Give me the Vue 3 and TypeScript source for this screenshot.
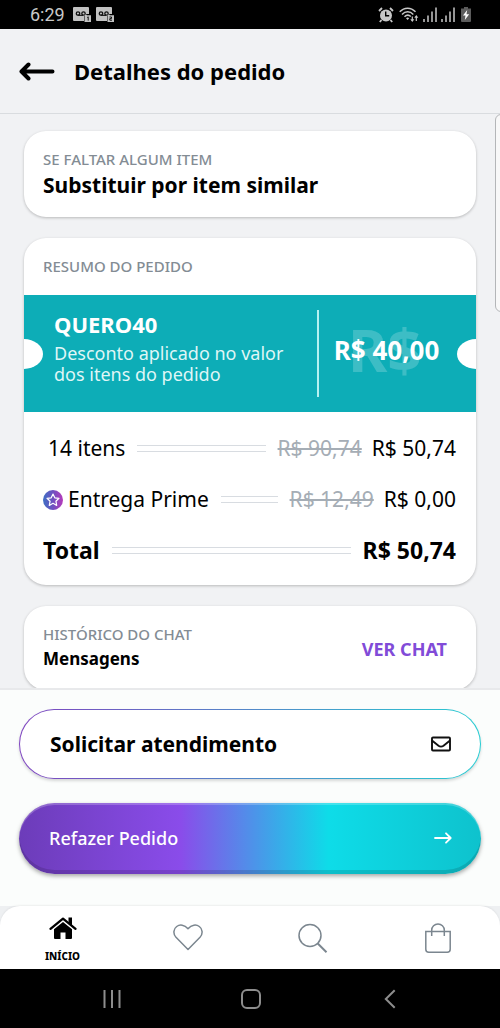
<script setup lang="ts">
interface PriceRow {
  label: string
  price: string
  oldPrice?: string
  kind?: 'indent' | 'prime' | 'total'
}

const rows: PriceRow[] = [
  { label: '14 itens', oldPrice: 'R$ 90,74', price: 'R$ 50,74', kind: 'indent' },
  { label: 'Entrega Prime', oldPrice: 'R$ 12,49', price: 'R$ 0,00', kind: 'prime' },
  { label: 'Total', price: 'R$ 50,74', kind: 'total' },
]

const simCards = [1, 2]
</script>

<template>
  <div class="screen">
    <div class="status">
      <span class="clock">6:29</span>
      <svg v-for="n in simCards" :key="n" class="sim" width="18" height="15" viewBox="0 0 18 15">
        <path d="M1 0h14a1 1 0 0 1 1 1v6h-5v7H1a1 1 0 0 1-1-1V1a1 1 0 0 1 1-1z" fill="#c2c2c2" />
        <circle cx="5" cy="6.500" r="1.700" fill="none" stroke="#111" stroke-width="1.300" />
        <circle cx="10.500" cy="6.500" r="1.700" fill="none" stroke="#111" stroke-width="1.300" />
        <path d="M5 8.300h5" stroke="#111" stroke-width="1.200" />
        <path d="M11.500 9V7.500h1.800L14 8.200h4V15h-6.500z" fill="#c2c2c2" />
        <path v-if="n === 1" d="M14.200 10.500l1-.7v3.800" fill="none" stroke="#111" />
        <path v-else d="M13.500 10h2v1.600h-1.700v1.600h2.200" fill="none" stroke="#111" />
      </svg>
      <span class="spacer"></span>
      <svg class="alarm" width="16" height="16" viewBox="0 0 16 16">
        <circle cx="8" cy="8.500" r="6" fill="#c8c8c8" />
        <path d="M1 4l3-3M15 4l-3-3M3.500 13l-1.700 2M12.500 13l1.700 2" stroke="#c8c8c8" stroke-width="1.800" />
        <path d="M7.700 4.500v4.300h3.500" fill="none" stroke="#000" stroke-width="1.400" />
      </svg>
      <svg class="wifi" width="20" height="16" viewBox="0 0 20 16">
        <g fill="none" stroke="#c8c8c8" stroke-width="1.500">
          <path d="M.7 4.800c4.600-4.900 11.200-4.900 15.800 0M3 7.400c3.400-3.500 8-3.500 11.300 0M5.500 9.800c2.100-2.100 4.300-2.100 6.300-.3" />
          <path d="M13.300 9.500v4.500M17.300 14V9.300" stroke-width="1.200" />
        </g>
        <path d="M7 11.200q1.600-1.200 3.200 0L8.600 13zM11.300 12.300h4l-2 2.700zM15.300 10.700h4l-2-2.700z" fill="#c8c8c8" />
      </svg>
      <svg v-for="n in 2" :key="'s' + n" class="signal" width="14" height="15" viewBox="0 0 14 15">
        <path d="M1 15v-3M5 15V8.500M9 15V4.500M13 15V.5" stroke="#c8c8c8" stroke-width="1.500" />
      </svg>
      <svg class="battery" width="10" height="15" viewBox="0 0 10 15">
        <path d="M3 0h4v1.500h3V14a1 1 0 0 1-1 1H1a1 1 0 0 1-1-1V1.500h3z" fill="#5c5c5c" />
        <path d="M6.200 3L2 8.600h2.500L3.800 13 8.200 7.300H5.500z" fill="#fff" />
      </svg>
    </div>

    <header class="header">
      <button class="back" type="button" aria-label="Voltar">
        <svg width="36" height="19" viewBox="0 0 36 19">
          <path d="M33.500 9.500H2.500M9.500 2.500L2.500 9.500l7 7" fill="none" stroke="#000" stroke-width="4" stroke-linecap="round" stroke-linejoin="round" />
        </svg>
      </button>
      <h1 class="title">Detalhes do pedido</h1>
    </header>

    <main class="content">
      <section class="card">
        <h2 class="label">SE FALTAR ALGUM ITEM</h2>
        <p class="big">Substituir por item similar</p>
      </section>

      <section class="card summary">
        <h2 class="label summary-label">RESUMO DO PEDIDO</h2>
        <div class="ticket">
          <div class="ticket-info">
            <strong class="coupon">QUERO40</strong>
            <p class="coupon-text">Desconto aplicado no valor dos itens do pedido</p>
          </div>
          <div class="ticket-value">
            <span class="watermark" aria-hidden="true">R$</span>
            <strong class="discount">R$ 40,00</strong>
          </div>
        </div>
        <div class="rows">
          <div v-for="row in rows" :key="row.label" class="row" :class="row.kind">
            <svg v-if="row.kind === 'prime'" class="prime-icon" width="20" height="20" viewBox="0 0 20 20">
              <defs>
                <linearGradient id="prime" x1="0" y1="0" x2="1" y2="0">
                  <stop offset="0" stop-color="#3d6fc4" />
                  <stop offset=".5" stop-color="#6f50c0" />
                  <stop offset="1" stop-color="#b63abb" />
                </linearGradient>
              </defs>
              <circle cx="10" cy="10" r="10" fill="url(#prime)" />
              <path d="M10 4l1.800 3.800 4.200.5-3.100 2.900.8 4.200-3.700-2.100-3.700 2.100.8-4.200L4 8.300l4.200-.5z" fill="none" stroke="#fff" stroke-width="1.200" stroke-linejoin="round" />
            </svg>
            <span class="row-label">{{ row.label }}</span>
            <span class="leader"></span>
            <s v-if="row.oldPrice" class="old">{{ row.oldPrice }}</s>
            <span class="price">{{ row.price }}</span>
          </div>
        </div>
      </section>

      <section class="card chat">
        <div>
          <h2 class="label">HISTÓRICO DO CHAT</h2>
          <p class="medium">Mensagens</p>
        </div>
        <a class="chat-link" href="#">VER CHAT</a>
      </section>
      <div class="edge-handle"></div>
    </main>

    <div class="actions">
      <button class="action outline" type="button">
        <span>Solicitar atendimento</span>
        <svg width="20" height="16" viewBox="0 0 20 16">
          <g fill="none" stroke="#111" stroke-width="1.900" stroke-linejoin="round">
            <rect x="1" y="1.500" width="18" height="13" rx="1" />
            <path d="M1 4.500l6.500 5.200q2.500 1.800 5 0L19 4.500" />
          </g>
        </svg>
      </button>
      <button class="action filled" type="button">
        <span>Refazer Pedido</span>
        <svg width="18" height="12" viewBox="0 0 18 12">
          <path d="M1 6h15.500M12 1.300L16.700 6 12 10.700" fill="none" stroke="#fff" stroke-width="1.800" stroke-linecap="round" stroke-linejoin="round" />
        </svg>
      </button>
    </div>

    <div class="nav-wrap">
      <nav class="nav">
        <a class="tab active" href="#">
          <svg width="28" height="22" viewBox="0 0 28 22">
            <path d="M1.500 11.800L14 1.700l12.500 10.100" fill="none" stroke="#000" stroke-width="2.300" stroke-linecap="round" stroke-linejoin="round" />
            <path d="M19.500 .5h3.500v8l-3.500-3z" />
            <path d="M5 12.200l9-7.300 9 7.300V21a1 1 0 0 1-1 1h-5.500v-6.500h-5V22H6a1 1 0 0 1-1-1z" />
          </svg>
          <span>INÍCIO</span>
        </a>
        <a class="tab" href="#" aria-label="Favoritos">
          <svg width="30" height="27" viewBox="0 0 30 27">
            <path d="M15 25.500L3 13.300C-.3 9.700.6 4.700 3.700 2.500c3.100-2.300 7.700-1.900 11.300 2.300 3.600-4.200 8.200-4.600 11.300-2.300 3.100 2.200 4 7.200.7 10.800z" fill="none" stroke="#7b868f" stroke-width="1.500" stroke-linejoin="round" />
          </svg>
        </a>
        <a class="tab" href="#" aria-label="Buscar">
          <svg width="30" height="30" viewBox="0 0 30 30">
            <path d="M19.500 20.200l9 9" stroke="#7b868f" stroke-width="2" />
            <circle cx="12" cy="12.500" r="11" fill="none" stroke="#7b868f" stroke-width="1.500" />
          </svg>
        </a>
        <a class="tab" href="#" aria-label="Sacola">
          <svg width="26" height="30" viewBox="0 0 26 30">
            <path d="M.8 8.500h24.400v17.700a3 3 0 0 1-3 3H3.800a3 3 0 0 1-3-3zM6.700 13V7.200a6.300 6.300 0 0 1 12.600 0V13" fill="none" stroke="#7b868f" stroke-width="1.500" />
          </svg>
        </a>
      </nav>
    </div>

    <div class="system">
      <button type="button" aria-label="Recentes">
        <svg width="18" height="20" viewBox="0 0 18 20"><path d="M1.500 1v18M9 1v18M16.500 1v18" stroke="#8d8d8d" stroke-width="2" /></svg>
      </button>
      <button type="button" aria-label="Tela inicial">
        <svg width="20" height="20" viewBox="0 0 20 20"><rect x="1" y="1" width="18" height="18" rx="5" fill="none" stroke="#8d8d8d" stroke-width="2" /></svg>
      </button>
      <button type="button" aria-label="Retornar">
        <svg width="12" height="20" viewBox="0 0 12 20"><path d="M10.700 1.200L1.800 10l8.900 8.800" fill="none" stroke="#8d8d8d" stroke-width="2" /></svg>
      </button>
    </div>
  </div>
</template>

<style>
body {
  margin: 0;
}
</style>

<style scoped>
.screen {
  display: flex;
  flex-direction: column;
  height: 100vh;
  background: #f1f2f4;
  color: #000;
  font-family: "Noto Sans", "Open Sans", sans-serif;
  font-size: 21px;
}
h1,
h2,
p {
  margin: 0;
}
button {
  border: 0;
  padding: 0;
  background: none;
  color: inherit;
  font-family: inherit;
}
a {
  color: inherit;
  text-decoration: none;
}
svg {
  display: block;
  flex: none;
}

.status {
  display: flex;
  align-items: center;
  flex: none;
  height: 29px;
  padding: 0 29px 0 30px;
  background: #000;
}
.clock {
  margin-right: 8px;
  color: #c8c8c8;
  font: 18px/29px Roboto, sans-serif;
}
.sim {
  margin-right: 5px;
}
.spacer {
  flex: 1;
}
.alarm {
  margin-right: 5px;
}
.wifi,
.signal {
  margin-right: 4px;
}
.battery {
  margin-left: 2px;
}

.header {
  display: flex;
  align-items: center;
  flex: none;
  gap: 19px;
  height: 84px;
  padding: 0 19px;
  border-bottom: 1px solid #d9dcdf;
}
.title {
  font-size: 22px;
  line-height: 32px;
  font-weight: 700;
}

.content {
  position: relative;
  flex: 1;
  min-height: 0;
  display: flex;
  flex-direction: column;
  gap: 21px;
  padding: 17px 24px 0;
  overflow: auto;
  scrollbar-width: none;
}
.card {
  flex: none;
  padding: 18px 20px 16px 19px;
  border-radius: 22px;
  background: #fff;
  box-shadow: 0 1px 3px rgba(0, 0, 0, 0.24);
}
.label {
  color: #838c94;
  font-size: 15px;
  line-height: 20px;
  font-weight: 500;
}
.big {
  font-size: 21px;
  line-height: 32px;
  font-weight: 700;
}
.medium {
  font-size: 17px;
  line-height: 30px;
  font-weight: 700;
}
.summary {
  padding: 18px 0 9px;
}
.summary-label {
  padding: 0 20px 19px 19px;
}
.ticket {
  position: relative;
  display: flex;
  align-items: stretch;
  padding: 15px 0;
  background: #0dadb7;
  color: #fff;
  overflow: hidden;
}
.ticket::before,
.ticket::after {
  content: "";
  position: absolute;
  top: 50%;
  width: 38px;
  height: 30px;
  margin-top: -15px;
  border-radius: 50%;
  background: #fff;
}
.ticket::before {
  left: -19px;
}
.ticket::after {
  right: -19px;
}
.ticket-info {
  flex: 1;
  padding: 0 24px 12px 30px;
}
.coupon {
  display: block;
  font-size: 22px;
  line-height: 28px;
}
.coupon-text {
  padding-top: 5px;
  color: #dff6f6;
  font-size: 18px;
  line-height: 21px;
}
.ticket-value {
  position: relative;
  display: flex;
  align-items: center;
  justify-content: center;
  width: 159px;
  border-left: 2px solid #b5f1f1;
  padding: 0 22px 8px 0;
  box-sizing: border-box;
}
.discount {
  position: relative;
  font-size: 26px;
  line-height: 32px;
}
.watermark {
  position: absolute;
  left: 29px;
  top: 0;
  color: rgba(255, 255, 255, 0.2);
  font-size: 60px;
  line-height: 78px;
  font-weight: 700;
}
.rows {
  padding: 11px 20px 0 19px;
}
.row {
  display: flex;
  align-items: center;
  line-height: 51px;
}
.indent {
  padding-left: 5px;
}
.total {
  font-size: 23px;
  font-weight: 700;
}
.prime-icon {
  margin-right: 5px;
}
.leader {
  flex: 1;
  height: 5px;
  margin: 0 12px;
  border: solid #d8dce1;
  border-width: 1px 0;
}
.old {
  margin-right: 10px;
  color: #a5adb5;
}

.chat {
  display: flex;
  align-items: center;
  justify-content: space-between;
}
.chat-link {
  margin-right: 9px;
  color: #814bd8;
  font-size: 18px;
  line-height: 28px;
  font-weight: 700;
}
.edge-handle {
  position: absolute;
  top: 0;
  right: -8px;
  width: 11px;
  height: 196px;
  border: 1px solid #b4b6b8;
  border-radius: 6px;
  background: #f8f8f8;
}

.actions {
  flex: none;
  display: flex;
  flex-direction: column;
  gap: 24px;
  padding: 19px 19px 32px;
  border-top: 2px solid #e8e9eb;
  background: #fbfdfc;
}
.action {
  display: flex;
  align-items: center;
  justify-content: space-between;
  height: 70px;
  padding: 0 29px 0 30px;
  border-radius: 36px;
}
.outline {
  border: 1px solid transparent;
  background:
    linear-gradient(#fff, #fff) padding-box,
    linear-gradient(90deg, #7f45c0, #27ccd2) border-box;
  box-shadow: 0 2px 3px rgba(0, 0, 0, 0.15);
  font-size: 21px;
  font-weight: 700;
}
.filled {
  height: 71px;
  padding-bottom: 2px;
  background: linear-gradient(90deg, #6c3cb9, #8a4cea 35%, #0edce8 67%, #0ec2cd);
  box-shadow:
    inset 0 2px 0 rgba(255, 255, 255, 0.22),
    inset 0 -4px 0 rgba(0, 0, 0, 0.13),
    0 2px 4px rgba(0, 0, 0, 0.35);
  color: #fff;
  font-size: 18px;
  font-weight: 500;
}

.nav-wrap {
  flex: none;
  background: #eef0f2;
}
.nav {
  display: grid;
  grid-template-columns: repeat(4, 1fr);
  height: 63px;
  border-radius: 20px 20px 0 0;
  background: #fff;
  box-shadow: 0 -1px 2px rgba(0, 0, 0, 0.06);
}
.tab {
  display: flex;
  flex-direction: column;
  align-items: center;
  justify-content: center;
}
.active {
  gap: 10px;
  padding-top: 5px;
  font-size: 10px;
  line-height: 14px;
  font-weight: 800;
}
.system {
  display: grid;
  grid-template-columns: repeat(3, 1fr);
  flex: none;
  height: 59px;
  padding: 0 40px 0 42px;
  background: #000;
}
.system button {
  display: grid;
  place-items: center;
}
</style>
